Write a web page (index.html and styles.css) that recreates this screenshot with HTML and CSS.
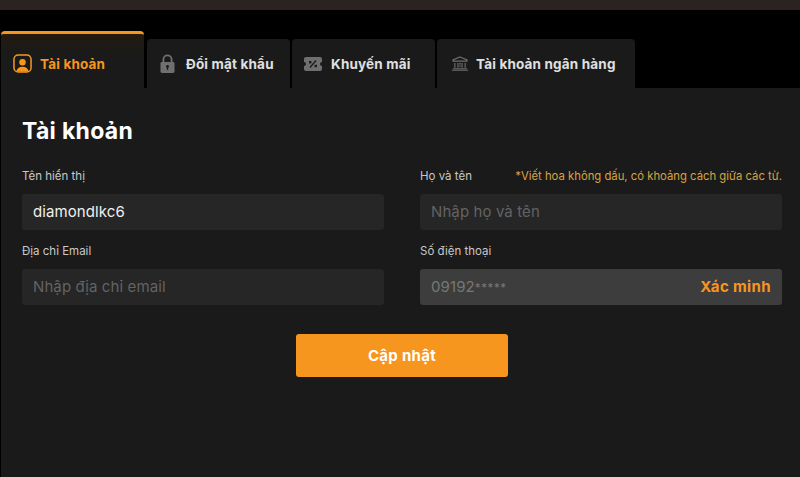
FILE: index.html
```html
<!DOCTYPE html>
<html lang="vi">
<head>
<meta charset="utf-8">
<title>Tài khoản</title>
<link rel="stylesheet" href="styles.css">
</head>
<body>
<div class="topbar"></div>
<main class="account">
  <nav class="tabs">
    <a class="tab tab-active">
      <svg class="icon" viewBox="0 0 20 20" width="19" height="19"><rect x="1" y="1" width="18" height="18" rx="4.5" fill="none" stroke="#f7961e" stroke-width="1.6"/><circle cx="10" cy="8.6" r="3.4" fill="#f7961e"/><path d="M3.5 18.5c.6-3.6 3-5.2 6.5-5.2s5.900 1.600 6.500 5.200z" fill="#f7961e"/></svg>
      <span>Tài khoản</span>
    </a>
    <a class="tab tab-pass">
      <svg class="icon" viewBox="0 0 16 20" width="15" height="19"><path d="M3.600 9V5.700a4.400 4.400 0 0 1 8.800 0V9" fill="none" stroke="#6f6f6f" stroke-width="2"/><rect x="0.500" y="8.500" width="15" height="11.500" rx="1.500" fill="#6f6f6f"/><circle cx="8" cy="13.200" r="1.500" fill="#1a1a1a"/><rect x="7.300" y="13.500" width="1.400" height="3.300" fill="#1a1a1a"/></svg>
      <span>Đổi mật khẩu</span>
    </a>
    <a class="tab tab-promo">
      <svg class="icon" viewBox="0 0 18 14" width="18" height="14"><path d="M2 0h14a2 2 0 0 1 2 2v3a2 2 0 0 0 0 4v3a2 2 0 0 1-2 2H2a2 2 0 0 1-2-2V9a2 2 0 0 0 0-4V2a2 2 0 0 1 2-2z" fill="#6f6f6f"/><path d="M6 10.500 12 3.500" stroke="#1a1a1a" stroke-width="1.300"/><rect x="5" y="4" width="2.400" height="2.400" fill="#1a1a1a"/><rect x="10.600" y="7.800" width="2.400" height="2.400" fill="#1a1a1a"/></svg>
      <span>Khuyến mãi</span>
    </a>
    <a class="tab tab-bank">
      <svg class="icon" viewBox="0 0 18 16" width="18" height="15"><path d="M9 1 16.500 4.200v1.300h-15V4.200z" fill="none" stroke="#6f6f6f" stroke-width="1.200"/><path d="M3.500 7.500v5M6.800 7.500v5M11.200 7.500v5M14.500 7.500v5" stroke="#6f6f6f" stroke-width="1.200"/><path d="M9 7.500v4.500" stroke="#6f6f6f" stroke-width="1.600" stroke-dasharray="1.500 1"/><path d="M1.500 13.500h15M.5 15.300h17" stroke="#6f6f6f" stroke-width="1.100"/></svg>
      <span>Tài khoản ngân hàng</span>
    </a>
  </nav>
  <section class="panel">
    <h1 class="title">Tài khoản</h1>
    <form class="form">
      <div class="grid">
        <div class="field">
          <label class="label">Tên hiển thị</label>
          <div class="input"><span class="value">diamondlkc6</span></div>
        </div>
        <div class="field">
          <label class="label label-row"><span>Họ và tên</span><span class="hint">*Viết hoa không dấu, có khoảng cách giữa các từ.</span></label>
          <div class="input"><span class="placeholder">Nhập họ và tên</span></div>
        </div>
        <div class="field">
          <label class="label">Địa chỉ Email</label>
          <div class="input"><span class="placeholder">Nhập địa chỉ email</span></div>
        </div>
        <div class="field">
          <label class="label">Số điện thoại</label>
          <div class="input input-disabled"><span class="placeholder">09192<span class="mask">*****</span></span><span class="verify">Xác minh</span></div>
        </div>
      </div>
      <div class="actions"><button class="submit" type="button">Cập nhật</button></div>
    </form>
  </section>
</main>
</body>
</html>
```

FILE: styles.css
```css
* { box-sizing: border-box; }
html, body { margin: 0; height: 100%; }
body {
  background: #000;
  font-family: "Inter", "Noto Sans", sans-serif;
  color: #fff;
  overflow: hidden;
}
.topbar { height: 10px; background: #2a2320; }
.account { padding-left: 1px; }
.tabs { display: flex; align-items: flex-end; height: 78px; }
.tab {
  display: flex;
  align-items: center;
  height: 49px;
  background: #1a1a1a;
  border-radius: 4px 4px 0 0;
  font-size: 13.500px;
  letter-spacing: .17px;
  font-weight: 700;
  color: #e0e0e0;
  margin-right: 2px;
}
.tab-active {
  width: 143px;
  height: 57px;
  padding: 5px 0 0 12px;
  margin-right: 3px;
  color: #f7961e;
  border-top: 3px solid #f7961e;
  background: linear-gradient(#241a0e, #1a1a1a 35%);
  gap: 8px;
}
.tab-pass { width: 143px; padding-left: 13px; gap: 11px; }
.tab-promo { width: 143px; padding-left: 12px; gap: 9px; }
.tab-bank { width: 198px; padding-left: 14px; gap: 7px; margin-right: 0; }
.icon { flex: none; }
.panel {
  height: 389px;
  background: #1a1a1a;
  padding: 29px 18px 0 21px;
}
.title { margin: 0; font-size: 23px; line-height: 28px; letter-spacing: .3px; font-weight: 700; color: #fff; }
.form { margin-top: 24px; }
.grid { display: grid; grid-template-columns: 362px 362px; column-gap: 36px; row-gap: 14px; }
.field { display: flex; flex-direction: column; gap: 11px; }
.label { font-size: 11.500px; line-height: 14px; color: #c8c8c8; }
.label-row { display: flex; justify-content: space-between; }
.hint { color: #d9a441; font-size: 11.300px; }
.input {
  display: flex;
  align-items: center;
  justify-content: space-between;
  height: 36px;
  padding: 0 11px 1px;
  background: #262626;
  border-radius: 3px;
  font-size: 15px;
  letter-spacing: .1px;
}
.input-disabled { background: #3d3d3d; }
.value { color: #f0f0f0; }
.placeholder { color: #636363; }
.input-disabled .placeholder { color: #777; }
.mask { font-size: 11.500px; letter-spacing: .6px; }
.verify { color: #f7961e; font-weight: 700; letter-spacing: .38px; }
.actions { display: flex; margin-top: 29px; padding-left: 274px; }
.submit {
  width: 212px;
  height: 43px;
  border: 0;
  border-radius: 3px;
  background: #f7961e;
  color: #fff;
  letter-spacing: .3px;
  font: 700 15px "Inter", "Noto Sans", sans-serif;
}
```
